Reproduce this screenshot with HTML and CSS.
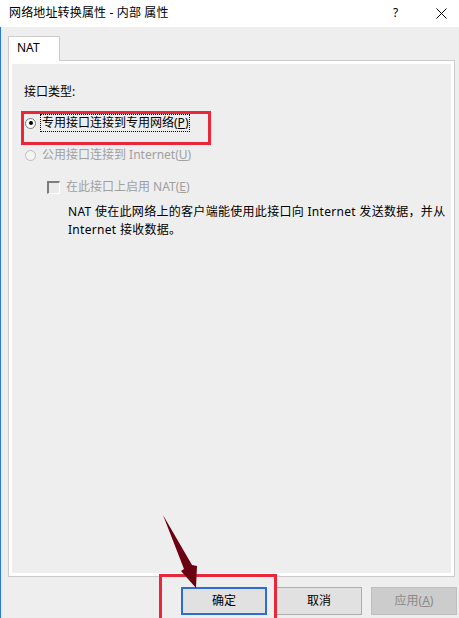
FILE: index.html
```html
<!DOCTYPE html>
<html>
<head>
<meta charset="utf-8">
<link rel="stylesheet" href="styles.css">
</head>
<body>
<div class="titlebar">
  <span class="title">网络地址转换属性 - 内部 属性</span>
  <span class="help">?</span>
  <svg class="close" width="11" height="11" viewBox="0 0 11 11"><path d="M0.5 0.5L10.5 10.5M10.5 0.5L0.5 10.5" stroke="#000" stroke-width="1" fill="none"/></svg>
</div>
<div class="frame">
  <div class="tab">NAT</div>
  <div class="panel">
    <div class="inner">
      <div class="group-label">接口类型:</div>
      <div class="row row-radio">
        <span class="radio checked"></span>
        <span class="label focus">专用接口连接到专用网络(<u>P</u>)</span>
      </div>
      <div class="row row-radio disabled">
        <span class="radio"></span>
        <span class="label">公用接口连接到 Internet(<u>U</u>)</span>
      </div>
      <div class="row row-check disabled">
        <span class="checkbox"></span>
        <span class="label">在此接口上启用 NAT(<u>E</u>)</span>
      </div>
      <div class="desc">NAT 使在此网络上的客户端能使用此接口向 Internet 发送数据，并从<br>Internet 接收数据。</div>
    </div>
  </div>
  <div class="buttons">
    <div class="btn default">确定</div>
    <div class="btn">取消</div>
    <div class="btn disabled-btn">应用(<u>A</u>)</div>
  </div>
</div>
<div class="mark mark-radio"></div>
<div class="mark mark-ok"></div>
<svg class="arrow" width="459" height="618" viewBox="0 0 459 618"><polygon points="163,515 192,565 197,566 196,588 181,571 184,569" fill="#6a0011"/></svg>
</body>
</html>
```
FILE: styles.css
```css
html, body {
  margin: 0;
  padding: 0;
}
body {
  width: 459px;
  height: 618px;
  overflow: hidden;
  background: #eeeeee;
  font-family: "Noto Sans", "Noto Sans CJK SC", sans-serif;
  font-size: 12px;
  color: #000;
  position: relative;
}
.titlebar {
  height: 27px;
  background: #fff;
  display: flex;
  align-items: center;
  padding-left: 9px;
  box-sizing: border-box;
  padding-bottom: 1px;
}
.title {
  flex: 1;
  line-height: 16px;
  letter-spacing: 0.15px;
}
.help {
  width: 12px;
  margin-right: 31px;
  line-height: 16px;
}
.close {
  margin-right: 12px;
  margin-top: 1px;
}
.frame {
  border-left: 1px solid #2b79d8;
  height: 591px;
  box-sizing: border-box;
  padding-left: 7px;
  padding-top: 9px;
}
.tab {
  position: relative;
  z-index: 1;
  width: 52px;
  height: 25px;
  box-sizing: border-box;
  border: 1px solid #cccccc;
  border-bottom: none;
  background: #fff;
  padding-left: 8px;
  line-height: 21px;
  margin-bottom: -1px;
}
.panel {
  width: 447px;
  height: 517px;
  box-sizing: border-box;
  border: 1px solid #cccccc;
  background: #fff;
  padding: 3px;
}
.inner {
  background: #eeeeee;
  height: 100%;
  padding-top: 19px;
  box-sizing: border-box;
  display: flex;
  flex-direction: column;
}
.group-label {
  padding-left: 12px;
  line-height: 18px;
}
.row {
  display: flex;
  align-items: center;
  height: 18px;
}
.row-radio {
  padding-left: 13px;
  margin-top: 13px;
}
.row-radio.disabled {
  margin-top: 14px;
}
.row-check {
  padding-left: 35px;
  margin-top: 14px;
}
.disabled {
  color: #a0a0a0;
}
.radio {
  width: 11px;
  height: 11px;
  box-sizing: border-box;
  border: 1px solid #a0a0a0;
  border-radius: 50%;
  background: #fff;
  display: flex;
  align-items: center;
  justify-content: center;
  margin-right: 5px;
}
.radio.checked {
  border-color: #7a7a7a;
}
.radio.checked::after {
  content: "";
  width: 4px;
  height: 4px;
  border-radius: 50%;
  background: #000;
}
.disabled .radio {
  border-color: #bdbdbd;
  background: #f4f4f4;
}
.checkbox {
  width: 13px;
  height: 13px;
  box-sizing: border-box;
  border-style: solid;
  border-width: 2px 1px 1px 2px;
  border-color: #7d7d7d #ffffff #ffffff #7d7d7d;
  background: #eaeaea;
  margin-right: 5px;
}
.label {
  padding: 0 1px;
  line-height: 16px;
}
.label.focus {
  outline: 1px dotted #000;
  outline-offset: 0;
}
.desc {
  padding-left: 56px;
  margin-top: 7px;
  line-height: 17.5px;
  letter-spacing: 0.3px;
}
.buttons {
  display: flex;
  justify-content: flex-end;
  gap: 9px;
  padding-right: 2px;
  margin-top: 10px;
}
.btn {
  width: 86px;
  height: 28px;
  box-sizing: border-box;
  border: 1px solid #adadad;
  background: #e1e1e1;
  display: flex;
  align-items: center;
  justify-content: center;
  line-height: 16px;
}
.btn.default {
  border: 2px solid #2b6cd6;
}
.btn.disabled-btn {
  background: #cccccc;
  border-color: #bfbfbf;
  color: #8a8a8a;
}
.mark {
  position: absolute;
  border: 3px solid #e8283a;
  box-sizing: border-box;
}
.mark-radio {
  left: 21px;
  top: 111px;
  width: 190px;
  height: 34px;
}
.mark-ok {
  left: 159px;
  top: 574px;
  width: 118px;
  height: 50px;
}
.arrow {
  position: absolute;
  left: 0;
  top: 0;
  pointer-events: none;
}
```
